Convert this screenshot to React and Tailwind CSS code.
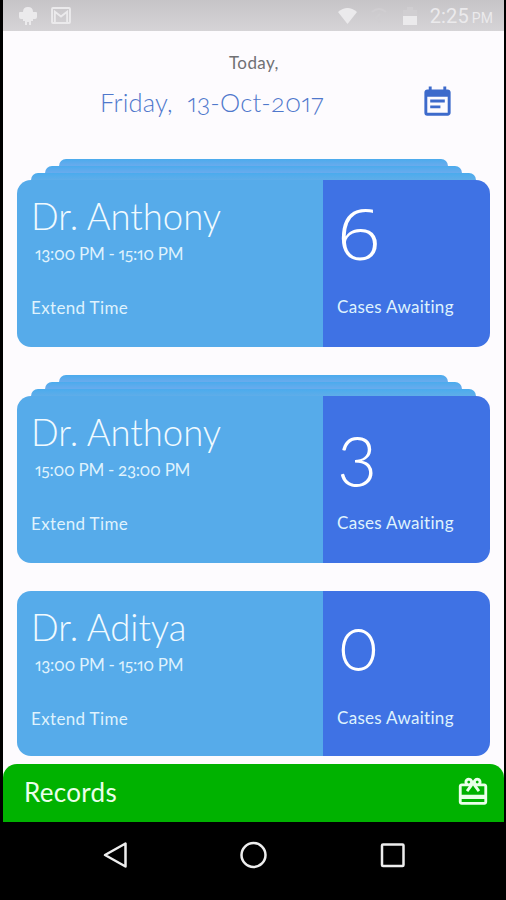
import { MdEventNote, MdCardGiftcard } from "react-icons/md";

const cards = [
  { name: "Dr. Anthony", time: "13:00 PM - 15:10 PM", count: 6, stacked: true },
  { name: "Dr. Anthony", time: "15:00 PM - 23:00 PM", count: 3, stacked: true },
  { name: "Dr. Aditya", time: "13:00 PM - 15:10 PM", count: 0, stacked: false },
];

function Stack() {
  return (
    <div className="flex flex-col items-center">
      <div className="h-[7px] w-[389px] rounded-t-[7px] bg-linear-to-b from-[#4aabed] to-[#69abed]" />
      <div className="h-[7px] w-[417px] rounded-t-[7px] bg-linear-to-b from-[#4aabed] to-[#69abed]" />
      <div className="h-[7px] w-[445px] rounded-t-[7px] bg-linear-to-b from-[#4aabed] to-[#5fade9]" />
    </div>
  );
}

function Count({ value }) {
  // Six takes a face whose stem curves over the bowl.
  if (value === 6) {
    return (
      <div className="origin-left scale-x-[1.1] font-['Open_Sans',sans-serif] text-[70px] leading-[80px] font-light [font-feature-settings:normal]">
        {value}
      </div>
    );
  }
  if (value === 0) {
    return <div className="origin-left scale-x-[0.87] pl-[1px] text-[75px] leading-[76px] font-light">{value}</div>;
  }
  return <div className="text-[76px] leading-[82px] font-light">{value}</div>;
}

function Card({ name, time, count, stacked }) {
  return (
    <div>
      {stacked && <Stack />}
      <div className={`flex overflow-hidden rounded-[14px] text-[#dff2fd] ${stacked ? "h-[167px]" : "h-[165px]"}`}>
        <div className="w-[306px] bg-[#56abea] pl-[14px] pt-[14px]">
          <div className="h-[46px] text-[36.500px] leading-[44px] font-light tracking-[-0.05px] whitespace-nowrap text-[#f0faff]">{name}</div>
          <div className="h-[54px] pl-1 text-[17px] leading-[28px] tracking-[-0.3px] whitespace-nowrap">{time}</div>
          <div className="text-[17px] leading-[28px] tracking-[0.35px]">Extend Time</div>
        </div>
        <div className="flex-1 bg-[#3f72e4] pl-[14px] pt-[13px]">
          <div className="h-[100px] text-white">
            <Count value={count} />
          </div>
          <div className="text-[17px] leading-[28px] tracking-[0.3px] whitespace-nowrap">Cases Awaiting</div>
        </div>
      </div>
    </div>
  );
}

export default function App() {
  return (
    <div className="h-[900px] w-[506px] overflow-hidden bg-black pl-[3px] pr-[2px] font-['Lato',sans-serif] [font-feature-settings:'onum','pnum'] [font-variant-ligatures:none]">
      <div className="flex h-[822px] flex-col bg-[#fdfbfe]">
        <header className="flex h-[31px] shrink-0 items-center bg-linear-to-b from-[#c6c4c7] to-[#d6d4d7] pl-[16px] pr-[11px] text-[#ebeaec]">
          <svg width="18" height="20" viewBox="0 0 18 20" fill="currentColor">
            <path d="M4 6Q4 1 9 1Q14 1 14 6H17Q18 6 18 7V11Q18 13 16 13H14V15H12V19H10V16H8V19H6V15H4V13H2Q0 13 0 11V7Q0 6 1 6Z" />
          </svg>
          <svg className="ml-[14px]" width="20" height="17" viewBox="0 0 21 18" fill="none" stroke="currentColor" strokeWidth="2">
            <rect x="1" y="1" width="19" height="16" rx="1" />
            <path d="M4 17V5l6.500 5L17 5v12" />
          </svg>
          <svg className="ml-auto" width="19" height="17" viewBox="0 0 19 17" fill="currentColor">
            <path d="M0 5Q9.500-3 19 5L9.500 17Z" />
          </svg>
          <svg className="ml-[14px]" width="16" height="18" viewBox="0 0 16 18" fill="none" stroke="#d0ced1" strokeWidth="2">
            <path d="M1 5Q8-1 15 5M9 7l-4 4 4 4" />
          </svg>
          <svg className="ml-4" width="14" height="18" viewBox="0 0 14 18">
            <path d="M4 0h6v3h4v6H0V3h4z" fill="#d0ced1" />
            <path d="M0 9h14v9H0z" fill="currentColor" />
          </svg>
          <div className="ml-[13px] font-['Roboto',sans-serif] text-[20px] leading-none tracking-[0.1px] [font-feature-settings:normal]">
            2:25<span className="ml-[3px] text-[14px]">PM</span>
          </div>
        </header>

        <div className="h-[128px] shrink-0 pt-[20px]">
          <div className="pl-[226px] text-[17px] leading-6 tracking-[0.4px] text-[#707073]">Today,</div>
          <div className="flex items-center pt-[9px] pl-[97px] text-[#4f78cc]">
            <span className="w-[320px] text-[25.500px] leading-9 font-light tracking-[0.2px] whitespace-pre">Friday,  13-Oct-2017</span>
            <MdEventNote size={35} color="#3d6acb" />
          </div>
        </div>

        <main className="flex flex-1 flex-col gap-[28px] pl-[14px] pr-[14px]">
          {cards.map((card, i) => (
            <Card key={i} {...card} />
          ))}
        </main>

        <footer className="flex h-[58px] shrink-0 items-center justify-between rounded-t-[14px] bg-[#00b200] pl-[21px] pr-[14px] text-[#eaffea]">
          <span className="pb-[2px] text-[26px] leading-8 tracking-[0.3px]">Records</span>
          <MdCardGiftcard size={34} className="mb-[2px]" />
        </footer>
      </div>

      <nav className="flex h-[66px] items-center pl-[99px] text-[#eeeeee]">
        <svg width="26" height="28" viewBox="0 0 26 28" fill="none" stroke="currentColor" strokeWidth="2.500" strokeLinejoin="round">
          <path d="M3 14L23.500 2.500V25.500Z" />
        </svg>
        <svg className="ml-[112px]" width="28" height="28" viewBox="0 0 28 28" fill="none" stroke="currentColor" strokeWidth="2.500">
          <circle cx="13.500" cy="14" r="12" />
        </svg>
        <svg className="ml-[112px]" width="26" height="26" viewBox="0 0 26 26" fill="none" stroke="currentColor" strokeWidth="2.500">
          <rect x="2" y="2.500" width="21.500" height="21.500" rx="1" />
        </svg>
      </nav>
    </div>
  );
}
